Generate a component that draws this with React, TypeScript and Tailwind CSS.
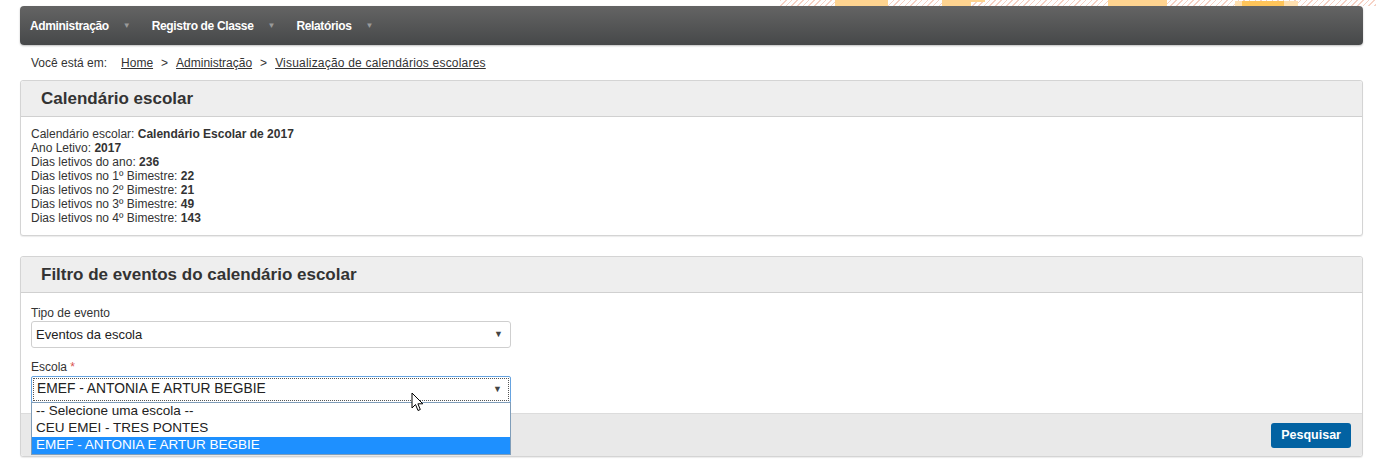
import { ReactNode } from "react";

const FONT = { fontFamily: '"Liberation Sans", Arial, sans-serif' };

const NAV = ["Administração", "Registro de Classe", "Relatórios"];

const INFO: [string, string][] = [
  ["Calendário escolar: ", "Calendário Escolar de 2017"],
  ["Ano Letivo: ", "2017"],
  ["Dias letivos do ano: ", "236"],
  ["Dias letivos no 1º Bimestre: ", "22"],
  ["Dias letivos no 2º Bimestre: ", "21"],
  ["Dias letivos no 3º Bimestre: ", "49"],
  ["Dias letivos no 4º Bimestre: ", "143"],
];

function Panel({ title, children }: { title: string; children: ReactNode }) {
  return (
    <div className="rounded-[3px] border border-[#d4d4d4] bg-white shadow-[0_1px_1px_rgba(0,0,0,0.08)]">
      <div className="h-[36px] border-b border-[#d0d0d0] bg-[#eeeeee] pl-[20px] flex items-center rounded-t-[3px]">
        <h2 className="text-[17px] font-bold text-[#333]">{title}</h2>
      </div>
      {children}
    </div>
  );
}

function Caret() {
  return <span className="text-[9px] text-[#444]">▼</span>;
}

function Cursor() {
  return (
    <svg width="14" height="21" viewBox="0 0 14 21" className="absolute left-[390px] top-[99px]">
      <path d="M1 1 L1 16 L4.5 12.5 L7 18.5 L9.3 17.5 L6.9 11.8 L11.8 11.8 Z" fill="#fff" stroke="#000" strokeWidth="1" strokeLinejoin="round" />
    </svg>
  );
}

export default function App() {
  return (
    <div className="w-[1376px] h-[470px] bg-white overflow-hidden text-[12px] text-[#333]" style={FONT}>
      {/* top decoration strip */}
      <div className="h-[6px] relative">
        <div className="absolute left-[780px] right-0 top-0 h-[6px] bg-[repeating-linear-gradient(135deg,#f6d1c4_0px,#f6d1c4_1px,transparent_1px,transparent_4px)]" />
        <div className="absolute left-[835px] w-[53px] top-0 h-[6px] bg-[#ffd490]" />
        <div className="absolute left-[942px] w-[29px] top-0 h-[6px] bg-[#ffd490]" />
        <div className="absolute left-[971px] w-[14px] top-0 h-[2px] bg-[#ffd490]" />
        <div className="absolute left-[1108px] w-[59px] top-0 h-[6px] bg-[#ffd490]" />
        <div className="absolute left-[1242px] w-[42px] top-[1px] h-[5px] bg-[#ffc55a]" />
        <div className="absolute left-[1235px] w-[7px] top-[1px] h-[5px] bg-[#ffe0b0]" />
        <div className="absolute left-[1284px] w-[14px] top-[1px] h-[5px] bg-[#ffe0b0]" />
      </div>

      <div className="pl-[20px] pr-[13px]">
        {/* navbar */}
        <nav className="h-[39px] rounded-[4px] bg-[linear-gradient(#646464,#464849)] flex items-center pl-[10px] shadow-[0_1px_2px_rgba(0,0,0,0.25)]">
          {NAV.map((n) => (
            <div key={n} className="flex items-center mr-[21px]">
              <span className="text-white font-bold text-[12px] tracking-[-0.35px]">{n}</span>
              <span className="ml-[14px] text-[8px] text-[#9a9a9a]">▼</span>
            </div>
          ))}
        </nav>

        {/* breadcrumb */}
        <div className="h-[35px] flex items-center pl-[11px] text-[12px] text-[#333]">
          <span>Você está em:</span>
          <a className="ml-[14px] underline">Home</a>
          <span className="mx-[8px]">&gt;</span>
          <a className="underline">Administração</a>
          <span className="mx-[8px]">&gt;</span>
          <a className="underline tracking-[0.2px]">Visualização de calendários escolares</a>
        </div>

        <Panel title="Calendário escolar">
          <div className="pt-[10px] pb-[10px] pl-[10px] leading-[14px]">
            {INFO.map(([k, v]) => (
              <div key={k}>
                {k}
                <b>{v}</b>
              </div>
            ))}
          </div>
        </Panel>

        <div className="h-[20px]" />

        <Panel title="Filtro de eventos do calendário escolar">
          <div className="relative">
            <div className="pl-[10px] pt-[13px] pb-[10px]">
              <div className="leading-[14px]">Tipo de evento</div>
              <div className="mt-[1px] w-[480px] h-[27px] border border-[#cfcfcf] rounded-[3px] flex items-center justify-between px-[4px] pr-[7px] text-[13px] text-[#222]">
                <span>Eventos da escola</span>
                <Caret />
              </div>
              <div className="mt-[12px] leading-[14px]">
                Escola <span className="text-[#d9534f]">*</span>
              </div>
              <div className="mt-[2px] w-[480px] h-[27px] border border-[#66a3e0] rounded-[2px] p-[1px]">
                <div className="h-full border border-dotted border-[#555] flex items-center justify-between px-[3px] pr-[6px] text-[13.8px] text-[#222]">
                  <span>EMEF - ANTONIA E ARTUR BEGBIE</span>
                  <Caret />
                </div>
              </div>
            </div>
            <div className="h-[43px] bg-[#e9e9e9] border-t border-[#dcdcdc] flex items-center justify-end pr-[11px] rounded-b-[3px]">
              <button className="h-[25px] px-[10px] rounded-[3px] bg-[#0262a2] text-white text-[12.5px] font-bold">
                Pesquisar
              </button>
            </div>

            {/* open dropdown list */}
            <div className="absolute left-[10px] top-[109px] w-[480px] border border-[#7f9db9] bg-white text-[13.5px] text-[#222] leading-[16px]">
              <div className="px-[4px] h-[17px]">-- Selecione uma escola --</div>
              <div className="px-[4px] h-[17px]">CEU EMEI - TRES PONTES</div>
              <div className="px-[4px] h-[17px] bg-[#1e90ff] text-white">EMEF - ANTONIA E ARTUR BEGBIE</div>
            </div>
            <Cursor />
          </div>
        </Panel>
      </div>
    </div>
  );
}
